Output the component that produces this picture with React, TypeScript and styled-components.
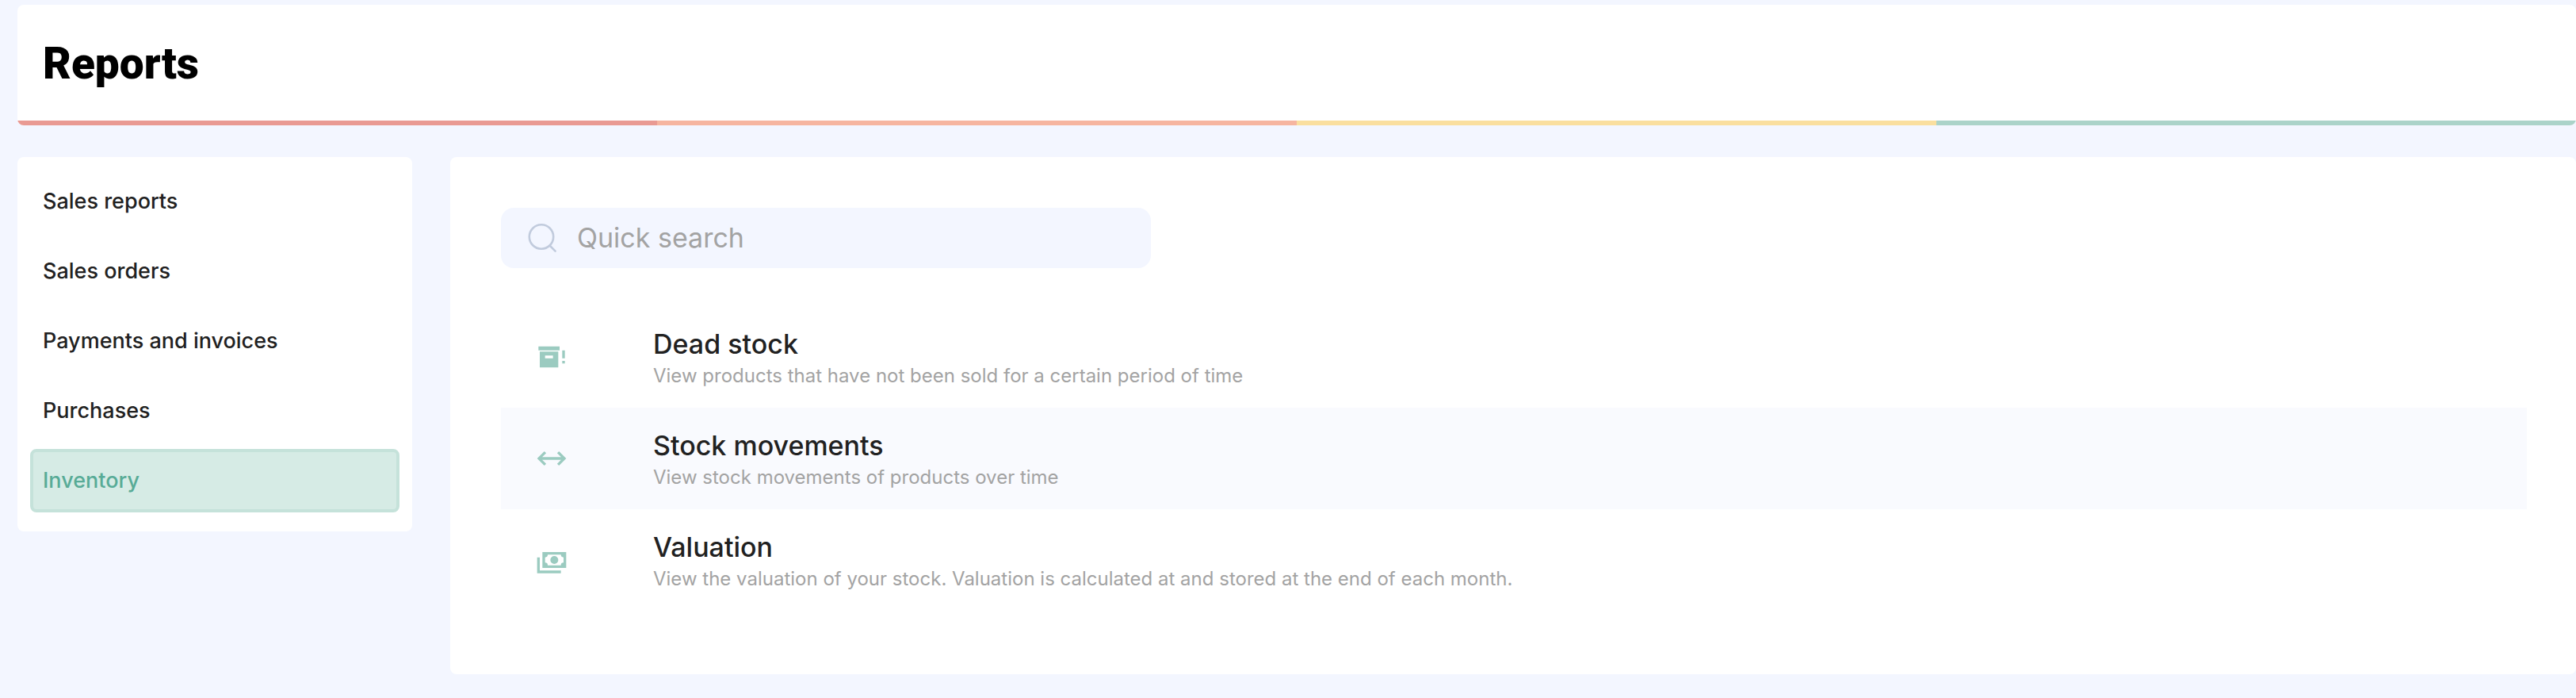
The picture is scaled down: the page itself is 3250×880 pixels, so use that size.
import React, { useState } from "react";
import styled, { createGlobalStyle } from "styled-components";

const GlobalStyle = createGlobalStyle`
  * {
    box-sizing: border-box;
  }

  body {
    margin: 0;
    background: #f3f6ff;
    color: #212121;
    font-family: Inter, "Liberation Sans", sans-serif;
  }
`;

const Page = styled.div`
  display: flex;
  flex-direction: column;
  gap: 40px;
  padding: 6px 0 30px 22px;
`;

const Header = styled.header`
  overflow: hidden;
  border-radius: 8px;
  background: #fff;
`;

const Title = styled.h1`
  margin: 0;
  padding: 42px 32px 40px;
  color: #000;
  font-family: Roboto, "Liberation Sans", sans-serif;
  font-size: 55px;
  font-weight: 900;
  line-height: 64px;
`;

const Stripe = styled.div`
  display: flex;
  height: 6px;
`;

const StripePart = styled.span<{ $color: string }>`
  flex: 1;
  background: ${({ $color }) => $color};
`;

const Body = styled.div`
  display: flex;
  align-items: flex-start;
  gap: 48px;
`;

const Sidebar = styled.nav`
  display: flex;
  flex: none;
  flex-direction: column;
  gap: 8px;
  width: 498px;
  padding: 16px 16px 24px;
  border-radius: 8px;
  background: #fff;
`;

const SidebarLink = styled.a<{ $active: boolean }>`
  padding: 20px 12px;
  border: 4px solid ${({ $active }) => ($active ? "#c5e2da" : "transparent")};
  border-radius: 8px;
  background: ${({ $active }) => ($active ? "#d6ebe5" : "transparent")};
  color: ${({ $active }) => ($active ? "#58ab97" : "#212121")};
  font-size: 27px;
  font-weight: 500;
  line-height: 32px;
  text-decoration: none;
`;

const Panel = styled.main`
  display: flex;
  flex: 1;
  flex-direction: column;
  gap: 48px;
  min-width: 0;
  padding: 64px 62px 80px 64px;
  border-radius: 8px;
  background: #fff;
`;

const SearchBox = styled.label`
  display: flex;
  align-items: center;
  gap: 24px;
  width: 100%;
  max-width: 820px;
  height: 76px;
  padding: 0 32px;
  border-radius: 16px;
  background: #f3f6ff;
`;

const SearchInput = styled.input`
  flex: 1;
  min-width: 0;
  padding: 0;
  border: 0;
  outline: 0;
  background: transparent;
  color: #212121;
  font-family: inherit;
  font-size: 34px;
  line-height: 40px;

  &::placeholder {
    color: #a3a3a3;
    opacity: 1;
  }
`;

const Icon = styled.svg`
  flex: none;
  width: 40px;
  height: 40px;
`;

const ReportList = styled.ul`
  margin: 0;
  padding: 0;
  list-style: none;
`;

const ReportItem = styled.li`
  &:nth-child(even) {
    background: #f9fafe;
  }
`;

const ReportLink = styled.a`
  display: flex;
  align-items: center;
  gap: 108px;
  min-height: 128px;
  padding: 24px 44px;
  color: #9bcbc0;
  text-decoration: none;
`;

const ReportText = styled.span`
  display: flex;
  flex-direction: column;
  gap: 4px;
  padding-top: 4px;
`;

const ReportName = styled.span`
  color: #212121;
  font-size: 34px;
  font-weight: 500;
  line-height: 40px;
`;

const ReportDescription = styled.span`
  color: #a3a3a3;
  font-size: 24px;
  line-height: 32px;
`;

const stripeColors = ["#e99a93", "#f6b5a0", "#fadf9f", "#abd3c9"];

const sections = [
  "Sales reports",
  "Sales orders",
  "Payments and invoices",
  "Purchases",
  "Inventory",
];

const reports = [
  {
    name: "Dead stock",
    description:
      "View products that have not been sold for a certain period of time",
    icon: "M2 4H18V7H2V4M3 8H17V20H3V8M7 11V13H13V11H7M20 7H22V13H20V7M20 15H22V17H20V15Z",
  },
  {
    name: "Stock movements",
    description: "View stock movements of products over time",
    icon: "M6.45 17.45L1 12L6.45 6.55L7.86 7.96L4.83 11H19.17L16.14 7.96L17.55 6.55L23 12L17.55 17.45L16.14 16.04L19.17 13H4.83L7.86 16.04L6.45 17.45Z",
  },
  {
    name: "Valuation",
    description:
      "View the valuation of your stock. Valuation is calculated at and stored at the end of each month.",
    icon: "M5 6H23V18H5V6M14 9A3 3 0 0 1 17 12A3 3 0 0 1 14 15A3 3 0 0 1 11 12A3 3 0 0 1 14 9M9 8A2 2 0 0 1 7 10V14A2 2 0 0 1 9 16H19A2 2 0 0 1 21 14V10A2 2 0 0 1 19 8H9M1 10H3V20H19V22H1V10Z",
  },
];

export default function App() {
  const [query, setQuery] = useState("");
  const visible = reports.filter((report) =>
    report.name.toLowerCase().includes(query.toLowerCase()),
  );

  return (
    <>
      <GlobalStyle />
      <Page>
        <Header>
          <Title>Reports</Title>
          <Stripe>
            {stripeColors.map((color) => (
              <StripePart key={color} $color={color} />
            ))}
          </Stripe>
        </Header>
        <Body>
          <Sidebar aria-label="Report sections">
            {sections.map((section) => (
              <SidebarLink
                key={section}
                href="#"
                $active={section === "Inventory"}
                aria-current={section === "Inventory" ? "page" : undefined}
              >
                {section}
              </SidebarLink>
            ))}
          </Sidebar>
          <Panel>
            <SearchBox>
              <Icon
                viewBox="0 0 40 40"
                fill="none"
                stroke="#c1cbdd"
                strokeWidth="2.6"
                strokeLinecap="round"
                aria-hidden="true"
              >
                <circle cx="19" cy="18.5" r="15.2" />
                <path d="M30 30L36.6 36.6" />
              </Icon>
              <SearchInput
                type="text"
                aria-label="Quick search"
                placeholder="Quick search"
                value={query}
                onChange={(event) => setQuery(event.target.value)}
              />
            </SearchBox>
            <ReportList>
              {visible.map((report) => (
                <ReportItem key={report.name}>
                  <ReportLink href="#">
                    <Icon viewBox="0 0 24 24" aria-hidden="true">
                      <path
                        d={report.icon}
                        fill="currentColor"
                        fillRule="evenodd"
                      />
                    </Icon>
                    <ReportText>
                      <ReportName>{report.name}</ReportName>
                      <ReportDescription>
                        {report.description}
                      </ReportDescription>
                    </ReportText>
                  </ReportLink>
                </ReportItem>
              ))}
            </ReportList>
          </Panel>
        </Body>
      </Page>
    </>
  );
}
